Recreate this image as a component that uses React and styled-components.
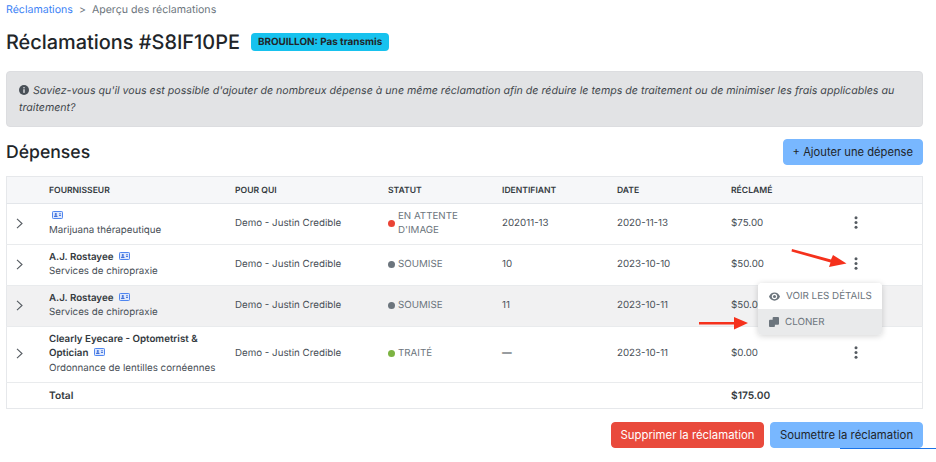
import React from 'react'
import styled, { createGlobalStyle } from 'styled-components'

const GlobalStyle = createGlobalStyle`
  html, body { margin: 0; padding: 0; background: #fff; }
  body { font-family: Inter, "Liberation Sans", sans-serif; color: #212529; overflow: hidden; text-rendering: geometricPrecision; }
`

const rows = [
  { name: '', sub: 'Marijuana thérapeutique', dot: '#ea4335', status: "EN ATTENTE D'IMAGE", id: '202011-13', date: '2020-11-13', amount: '$75.00' },
  { name: 'A.J. Rostayee', sub: 'Services de chiropraxie', dot: '#6c757d', status: 'SOUMISE', id: '10', date: '2023-10-10', amount: '$50.00' },
  { name: 'A.J. Rostayee', sub: 'Services de chiropraxie', dot: '#6c757d', status: 'SOUMISE', id: '11', date: '2023-10-11', amount: '$50.00', hover: true },
  { name: 'Clearly Eyecare - Optometrist & Optician', sub: 'Ordonnance de lentilles cornéennes', dot: '#7cb342', status: 'TRAITÉ', id: '—', date: '2023-10-11', amount: '$0.00' },
]

const CardIcon = () => (
  <CardSvg viewBox="0 0 11 8">
    <rect x="0.500" y="0.500" width="10" height="7" rx="0.800" fill="#dfe9fd" stroke="#4f86f0" />
    <circle cx="3.800" cy="3" r="1.100" fill="#3f6fd8" />
    <path d="M2 6c0-1.200.8-1.700 1.800-1.700S5.600 4.800 5.600 6Z" fill="#3f6fd8" />
    <path d="M7 2.800h2M7 4.500h2" stroke="#3f6fd8" strokeWidth="0.900" />
  </CardSvg>
)

export default function App() {
  return (
    <Page>
      <GlobalStyle />
      <Breadcrumb>
        <CrumbLink>Réclamations</CrumbLink>
        <CrumbSep>&gt;</CrumbSep>
        <span>Aperçu des réclamations</span>
      </Breadcrumb>
      <TitleRow>
        <Title>Réclamations #S8IF10PE</Title>
        <Badge>BROUILLON: Pas transmis</Badge>
      </TitleRow>
      <Alert>
        <AlertIcon viewBox="0 0 16 16">
          <circle cx="8" cy="8" r="8" fill="#495057" />
          <circle cx="8" cy="4.400" r="1.300" fill="#e2e3e5" />
          <rect x="6.900" y="6.800" width="2.200" height="5.800" fill="#e2e3e5" />
        </AlertIcon>
        Saviez-vous qu'il vous est possible d'ajouter de nombreux dépense à une même réclamation afin de réduire le temps de traitement ou de minimiser les frais applicables au traitement?
      </Alert>
      <SectionRow>
        <SectionTitle>Dépenses</SectionTitle>
        <Button>+ Ajouter une dépense</Button>
      </SectionRow>
      <Table>
        <colgroup>
          <col width="42.500" />
          <col width="186" />
          <col width="153" />
          <col width="114" />
          <col width="115" />
          <col width="114" />
          <col width="104" />
          <col />
        </colgroup>
        <thead>
          <tr>
            <Th />
            <Th>Fournisseur</Th>
            <Th>Pour qui</Th>
            <Th>Statut</Th>
            <Th>Identifiant</Th>
            <Th>Date</Th>
            <Th>Réclamé</Th>
            <Th />
          </tr>
        </thead>
        <tbody>
          {rows.map((r, i) => (
            <Tr key={i} $hover={r.hover}>
              <Td><Chevron viewBox="0 0 7 11"><path d="M1 .800 6 5.500l-5 4.700" /></Chevron></Td>
              <Td>
                {r.name ? <Vendor>{r.name} <CardIcon /></Vendor> : <div><CardIcon /></div>}
                <Sub>{r.sub}</Sub>
              </Td>
              <Td>Demo - Justin Credible</Td>
              <Td>
                <Status>
                  <Dot $color={r.dot} />
                  <span>{r.status}</span>
                </Status>
              </Td>
              <Td>{r.id}</Td>
              <Td>{r.date}</Td>
              <Td>{r.amount}</Td>
              <Td>{!r.hover && <Dots viewBox="0 0 4 13"><circle cx="2" cy="1.700" r="1.500" /><circle cx="2" cy="6.500" r="1.500" /><circle cx="2" cy="11.300" r="1.500" /></Dots>}</Td>
            </Tr>
          ))}
          <TotalRow>
            <TotalCell />
            <TotalCell colSpan="5">Total</TotalCell>
            <TotalCell colSpan="2">$175.00</TotalCell>
          </TotalRow>
        </tbody>
      </Table>
      <Footer>
        <Button $danger $wide>Supprimer la réclamation</Button>
        <Button $wide>Soumettre la réclamation</Button>
      </Footer>
      <Menu>
        <MenuItem>
          <MenuIcon viewBox="0 0 16 12">
            <path fillRule="evenodd" d="M8 0C4.400 0 1.400 2.300 0 6c1.400 3.700 4.400 6 8 6s6.600-2.300 8-6c-1.400-3.700-4.400-6-8-6Zm0 10c-2.300 0-4-1.800-4-4s1.700-4 4-4 4 1.800 4 4-1.700 4-4 4Z" />
            <circle cx="8" cy="6" r="2.200" />
          </MenuIcon>
          Voir les détails
        </MenuItem>
        <MenuItem $active>
          <CloneIcon viewBox="0 0 11 11">
            <rect x="0" y="3" width="6.500" height="8" rx="1" />
            <rect x="4" y="0" width="7" height="8.500" rx="1" />
          </CloneIcon>
          Cloner
        </MenuItem>
      </Menu>
      <Arrows viewBox="0 0 936 462">
        <path d="M792 249 831 259.500 833 255 846.500 263.500 829 267 830.500 262.500 791.500 251.500Z" />
        <path d="M699 322H734V317L748 323 734 329.500V324.500H699Z" />
      </Arrows>
      <BottomLine />
    </Page>
  )
}

const Page = styled.div`
  position: relative;
  width: 936px;
  height: 462px;
  box-sizing: border-box;
  padding: 3px 13px 0 6px;
  overflow: hidden;
`

const Breadcrumb = styled.div`
  height: 14px;
  font-size: 10.600px;
  line-height: 14px;
  color: #6c757d;
`

const CrumbLink = styled.span`
  color: #3b82f6;
`

const CrumbSep = styled.span`
  margin: 0 6px;
`

const TitleRow = styled.div`
  display: flex;
  align-items: center;
  margin-top: 13px;
  height: 24px;
`

const Title = styled.h1`
  margin: 0;
  font-size: 19.900px;
  font-weight: 500;
  line-height: 24px;
`

const Badge = styled.span`
  margin-left: 11px;
  height: 18px;
  padding: 0 7px;
  border-radius: 4px;
  background: #17c2ee;
  font-size: 9.900px;
  font-weight: 700;
  line-height: 18px;
  color: #212529;
`

const Alert = styled.div`
  margin-top: 17px;
  height: 56px;
  box-sizing: border-box;
  padding: 10px 12px;
  border: 1px solid #dcdde0;
  border-radius: 4px;
  background: #e2e3e5;
  color: #41464b;
  font-size: 10.630px;
  font-style: italic;
  line-height: 17px;
`

const AlertIcon = styled.svg`
  width: 10px;
  height: 10px;
  margin-right: 4px;
  vertical-align: -1px;
`

const SectionRow = styled.div`
  display: flex;
  justify-content: space-between;
  align-items: center;
  margin-top: 12px;
`

const SectionTitle = styled.h2`
  margin: 1px 0 0;
  font-size: 17.600px;
  font-weight: 500;
  line-height: 25px;
`

const Button = styled.button`
  ${p => (p.$wide ? 'width: 153px;' : '')}
  height: 26px;
  padding: 0 ${p => (p.$wide ? '0' : '9px')};
  border: 1px solid ${p => (p.$danger ? '#e94a3c' : '#78b7ff')};
  border-radius: 4px;
  background: ${p => (p.$danger ? '#e94a3c' : '#78b7ff')};
  color: ${p => (p.$danger ? '#fff' : '#212529')};
  font-family: inherit;
  font-size: ${p => (p.$wide ? '11.350px' : '11.200px')};
  line-height: 24px;
  white-space: nowrap;
`

const Table = styled.table`
  margin-top: 11px;
  width: 917px;
  table-layout: fixed;
  border-collapse: collapse;
  border: 1px solid #e6e8eb;
  font-size: 9.750px;
  color: #495057;
`

const Th = styled.th`
  height: 25px;
  padding: 1px 0 0;
  background: #f6f7f9;
  border-bottom: 1px solid #e3e6ea;
  color: #343a40;
  font-size: 8.600px;
  font-weight: 600;
  text-align: left;
  text-transform: uppercase;
`

const Tr = styled.tr`
  background: ${p => (p.$hover ? '#f1f1f2' : '#fff')};
  border-bottom: 1px solid #e9ebed;
`

const TotalRow = styled.tr`
  height: 26px;
`

const Td = styled.td`
  padding: 5.500px 0;
  line-height: 14.500px;
  vertical-align: middle;
`

const TotalCell = styled.td`
  padding: 1px 0 0;
  font-size: 10.200px;
  font-weight: 600;
  color: #343a40;
`

const Chevron = styled.svg`
  display: block;
  width: 7px;
  height: 11px;
  margin: -2px 0 0 9px;
  fill: none;
  stroke: #555b61;
  stroke-width: 1.100;
`

const Vendor = styled.div`
  font-weight: 600;
  color: #343a40;
`

const Sub = styled.div`
  color: #495057;
`

const CardSvg = styled.svg`
  display: inline-block;
  width: 11px;
  height: 8px;
  margin-left: 3px;
`

const Status = styled.div`
  display: flex;
  align-items: center;
  gap: 3px;
  padding-right: 25px;
  color: #6c757d;
`

const Dot = styled.span`
  flex: none;
  width: 7px;
  height: 7px;
  margin-top: -2px;
  border-radius: 50%;
  background: ${p => p.$color};
`

const Dots = styled.svg`
  display: block;
  width: 4px;
  height: 13px;
  margin: -4px 0 0 19px;
  fill: #555b61;
`

const Footer = styled.div`
  display: flex;
  justify-content: flex-end;
  gap: 6px;
  margin-top: 13px;
`

const Menu = styled.div`
  position: absolute;
  left: 758px;
  top: 283px;
  width: 124px;
  border-radius: 4px;
  background: #fff;
  box-shadow: 0 1px 6px rgba(0, 0, 0, 0.18);
  overflow: hidden;
`

const MenuItem = styled.div`
  display: flex;
  align-items: center;
  gap: 6px;
  height: 26px;
  padding-left: 11px;
  background: ${p => (p.$active ? '#e9eaeb' : '#fff')};
  color: #6c757d;
  font-size: 9.800px;
  text-transform: uppercase;
`

const MenuIcon = styled.svg`
  width: 11px;
  height: 9px;
  fill: #6c757d;
`

const CloneIcon = styled.svg`
  width: 10px;
  height: 10px;
  fill: #6c757d;
`

const Arrows = styled.svg`
  position: absolute;
  left: 0;
  top: 0;
  width: 936px;
  height: 462px;
  fill: #f5311c;
  pointer-events: none;
`

const BottomLine = styled.div`
  position: absolute;
  left: 840px;
  top: 448px;
  width: 96px;
  height: 1px;
  background: #1a73e8;
`
